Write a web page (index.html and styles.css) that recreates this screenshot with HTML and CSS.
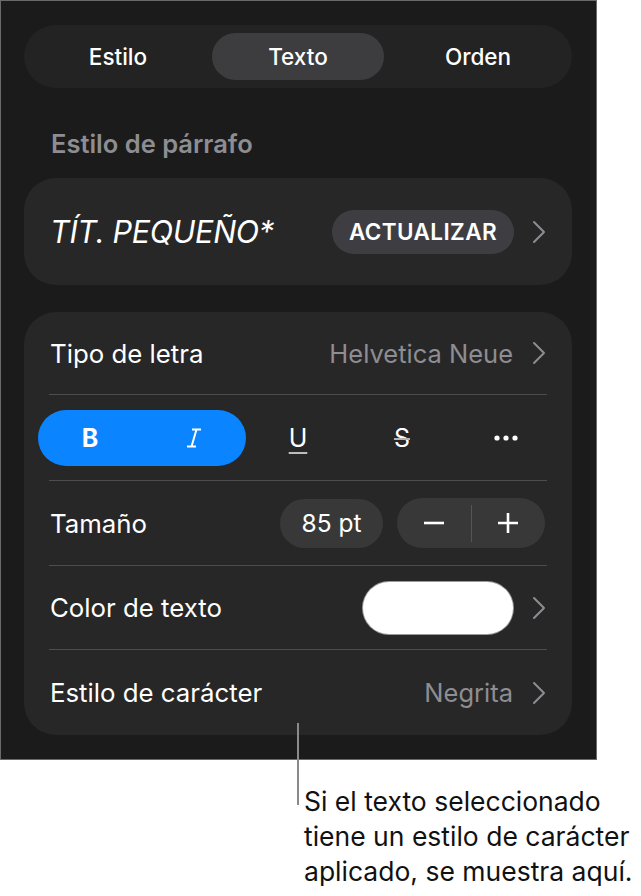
FILE: index.html
```html
<!DOCTYPE html>
<html lang="es">
<head>
<meta charset="utf-8">
<link rel="stylesheet" href="styles.css">
</head>
<body>
<div class="page">
  <div class="panel">
    <div class="segmented">
      <div class="seg">Estilo</div>
      <div class="seg seg-active">Texto</div>
      <div class="seg">Orden</div>
    </div>

    <div class="section-title">Estilo de párrafo</div>

    <div class="card card-style">
      <div class="style-name">TÍT. PEQUEÑO*</div>
      <div class="update-pill">ACTUALIZAR</div>
      <svg class="chev" viewBox="0 0 14 24" width="14" height="24"><polyline points="2,2 12,12 2,22"/></svg>
    </div>

    <div class="card card-text">
      <div class="row row-font">
        <span class="label">Tipo de letra</span>
        <span class="value">Helvetica Neue</span>
        <svg class="chev" viewBox="0 0 14 24" width="14" height="24"><polyline points="2,2 12,12 2,22"/></svg>
      </div>
      <div class="sep"></div>
      <div class="row row-format">
        <div class="bi-pill">
          <div class="fmt fmt-b">B</div>
          <div class="fmt">
            <svg viewBox="0 0 16 22" width="16" height="22" class="ico-i"><path d="M6 2.5H15M1 19.5H10M10.5 2.5L5.5 19.5"/></svg>
          </div>
        </div>
        <div class="fmt fmt-u">U</div>
        <div class="fmt fmt-s">S</div>
        <div class="fmt">
          <svg viewBox="0 0 26 8" width="26" height="8" class="ico-dots"><circle cx="4" cy="4" r="2.6"/><circle cx="13" cy="4" r="2.6"/><circle cx="22" cy="4" r="2.6"/></svg>
        </div>
      </div>
      <div class="sep"></div>
      <div class="row row-size">
        <span class="label">Tamaño</span>
        <div class="size-pill">85 pt</div>
        <div class="stepper">
          <div class="step"><svg viewBox="0 0 22 22" width="22" height="22" class="ico-pm"><path d="M1 11H21"/></svg></div>
          <div class="step-div"></div>
          <div class="step"><svg viewBox="0 0 22 22" width="22" height="22" class="ico-pm"><path d="M1 11H21M11 1V21"/></svg></div>
        </div>
      </div>
      <div class="sep"></div>
      <div class="row row-color">
        <span class="label">Color de texto</span>
        <div class="swatch"></div>
        <svg class="chev" viewBox="0 0 14 24" width="14" height="24"><polyline points="2,2 12,12 2,22"/></svg>
      </div>
      <div class="sep"></div>
      <div class="row row-char">
        <span class="label">Estilo de carácter</span>
        <span class="value">Negrita</span>
        <svg class="chev" viewBox="0 0 14 24" width="14" height="24"><polyline points="2,2 12,12 2,22"/></svg>
      </div>
    </div>
  </div>

  <div class="leader"></div>
  <p class="callout">Si el texto seleccionado<br>tiene un estilo de carácter<br>aplicado, se muestra aquí.</p>
</div>
</body>
</html>
```

FILE: styles.css
```css
html, body {
  margin: 0;
  padding: 0;
  background: #ffffff;
}
body {
  font-family: Inter, "Noto Sans", "Liberation Sans", sans-serif;
  color: #ffffff;
}
.page {
  position: relative;
  width: 641px;
  height: 896px;
  overflow: hidden;
}
.panel {
  box-sizing: border-box;
  width: 597px;
  height: 760px;
  background: #1b1b1b;
  border: 1px solid #6a6a6a;
  padding: 24px 24px 0 23px;
}
.segmented {
  box-sizing: border-box;
  height: 63px;
  border-radius: 32px;
  background: #232323;
  padding: 8px;
  display: grid;
  grid-template-columns: 1fr 1fr 1fr;
  column-gap: 8px;
}
.seg {
  display: flex;
  align-items: center;
  justify-content: center;
  font-size: 22.5px;
  font-weight: 500;
  color: #ffffff;
  border-radius: 24px;
}
.seg-active {
  background: #3d3d3f;
}
.section-title {
  margin: 42px 0 20px 27px;
  height: 28px;
  line-height: 28px;
  font-size: 25.5px;
  font-weight: 600;
  color: #8d8d92;
}
.card {
  background: #272727;
  border-radius: 32px;
}
.card-style {
  box-sizing: border-box;
  height: 107px;
  display: flex;
  align-items: center;
  padding: 0 26px 0 26px;
}
.style-name {
  flex: 1;
  font-size: 30.5px;
  font-style: italic;
  font-weight: 400;
  letter-spacing: -0.3px;
  white-space: nowrap;
}
.update-pill {
  box-sizing: border-box;
  height: 44px;
  padding: 0 17px;
  border-radius: 22px;
  background: #3e3e42;
  display: flex;
  align-items: center;
  font-size: 22.5px;
  font-weight: 600;
  letter-spacing: 0.4px;
  margin-right: 18px;
}
.chev {
  display: block;
  flex: none;
}
.chev polyline {
  fill: none;
  stroke: #8d8d92;
  stroke-width: 2;
  stroke-linecap: round;
  stroke-linejoin: round;
}
.card-text {
  margin-top: 27px;
  height: 423px;
  box-sizing: border-box;
}
.row {
  display: flex;
  align-items: center;
  box-sizing: border-box;
  padding: 0 26px 0 26px;
}
.label {
  flex: 1;
  font-size: 25.8px;
  font-weight: 400;
  white-space: nowrap;
}
.value {
  font-size: 25.5px;
  color: #8d8d92;
  margin-right: 19px;
  white-space: nowrap;
}
.sep {
  height: 1px;
  background: #4d4d4f;
  margin: 0 25px 0 25px;
}
.row-font { height: 82px; }
.row-format {
  height: 85px;
  padding: 0 14px;
  display: grid;
  grid-template-columns: 208px 104px 104px 104px;
}
.bi-pill {
  height: 56px;
  border-radius: 28px;
  background: #0a84ff;
  display: grid;
  grid-template-columns: 1fr 1fr;
}
.fmt {
  display: flex;
  align-items: center;
  justify-content: center;
  font-size: 25px;
  color: #ffffff;
}
.fmt-b {
  font-weight: 700;
  font-size: 25px;
}
.ico-i path {
  fill: none;
  stroke: #ffffff;
  stroke-width: 2;
}
.fmt-u {
  font-weight: 400;
  text-decoration: underline;
  text-decoration-thickness: 2px;
  text-underline-offset: 5px;
  text-decoration-color: #bdbdbd;
}
.fmt-s {
  font-weight: 400;
  text-decoration: line-through;
  text-decoration-thickness: 2px;
  text-decoration-color: #b5b5b5;
}
.ico-dots circle {
  fill: #ffffff;
}
.row-size { height: 84px; padding-right: 27px; }
.size-pill {
  box-sizing: border-box;
  width: 103px;
  height: 49px;
  border-radius: 25px;
  background: #383838;
  display: flex;
  align-items: center;
  justify-content: center;
  font-size: 24.5px;
  margin-right: 14px;
}
.stepper {
  width: 148px;
  height: 50px;
  border-radius: 25px;
  background: #383838;
  display: flex;
  align-items: center;
}
.step {
  flex: 1;
  display: flex;
  align-items: center;
  justify-content: center;
}
.step-div {
  width: 1px;
  height: 37px;
  background: #555;
}
.ico-pm path {
  fill: none;
  stroke: #ffffff;
  stroke-width: 2.6;
}
.row-color { height: 83px; }
.swatch {
  width: 150px;
  height: 52px;
  border-radius: 26px;
  background: #ffffff;
  box-shadow: 0 0 0 1px #9a9a9a;
  margin-right: 19px;
}
.row-char { height: 85px; }
.leader {
  position: absolute;
  left: 297px;
  top: 723px;
  width: 2px;
  height: 82px;
  background: #8a8a8a;
}
.callout {
  margin: 24px 0 0 304px;
  font-size: 26.5px;
  line-height: 35px;
  color: #111111;
  white-space: nowrap;
}
```
